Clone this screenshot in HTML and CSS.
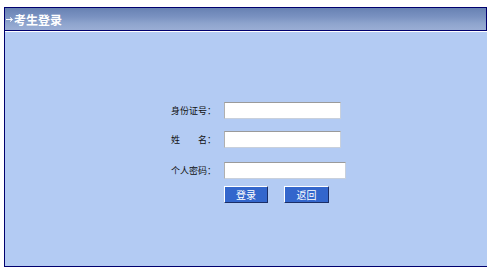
FILE: index.html
```html
<!DOCTYPE html>
<html lang="zh-CN">
<head>
<meta charset="utf-8">
<title>考生登录</title>
<link rel="stylesheet" href="styles.css">
</head>
<body>
<div class="panel">
  <div class="panel-head">
    <svg class="arrow" width="7" height="5" viewBox="0 0 7 5"><path d="M0 2.5H6M4 0.5L6.5 2.5L4 4.5" fill="none" stroke="#fff" stroke-width="1"/></svg><span class="title">考生登录</span>
  </div>
  <div class="panel-body">
    <form class="login">
      <label class="lbl">身份证号：</label>
      <div class="field"><input class="txt" type="text"></div>
      <label class="lbl">姓　　名：</label>
      <div class="field"><input class="txt" type="text"></div>
      <label class="lbl">个人密码：</label>
      <div class="field"><input class="txt wide" type="password"></div>
      <span></span>
      <div class="btns"><button class="btn" type="button">登录</button><button class="btn btn2" type="button">返回</button></div>
    </form>
  </div>
</div>
</body>
</html>
```
FILE: styles.css
```css
html, body {
  margin: 0;
  padding: 0;
  background: #ffffff;
}
body {
  font-family: "Noto Sans CJK SC", "Noto Sans", sans-serif;
}
.panel {
  margin: 7px 0 0 4px;
  width: 482px;
  height: 258px;
  border-left: 1px solid #00006e;
  border-top: 1px solid #00006e;
  border-bottom: 1px solid #00006e;
  display: flex;
  flex-direction: column;
}
.panel-head {
  box-sizing: border-box;
  border-right: 1px solid #00006e;
  border-bottom: 1px solid #00006e;
  height: 23px;
  background: linear-gradient(#6882b3 0%, #7a92c1 40%, #8ea4cd 70%, #9aaed5 100%);
  display: flex;
  align-items: center;
  padding-left: 1px;
  color: #fff;
  font-weight: bold;
  font-size: 12px;
}
.arrow {
  margin-right: 1px;
  margin-top: 1px;
}
.title {
  line-height: 12px;
  margin-top: 1px;
}
.panel-body {
  flex: 1;
  border-top: 1px solid #ffffff;
  background: #b3cbf3;
}
.login {
  margin: 70px 0 0 145px;
  display: grid;
  grid-template-columns: 66px auto;
  grid-template-rows: 29px 31px 24px auto;
  column-gap: 8px;
  align-items: start;
}
.lbl {
  font-size: 9px;
  line-height: 17px;
  color: #111;
  text-align: right;
  white-space: nowrap;
}
.field {
  display: flex;
}
.txt {
  width: 117px;
  height: 17px;
  box-sizing: border-box;
  margin: 0;
  padding: 0 2px;
  border: 1px solid #c8d0dc;
  border-top-color: #9a9a9a;
  border-left-color: #b0b0b0;
  background: #fff;
  font-size: 9px;
}
.txt.wide {
  width: 122px;
}
.btns {
  display: flex;
  gap: 16px;
}
.btn {
  width: 44px;
  height: 17px;
  box-sizing: border-box;
  margin: 0;
  padding: 0;
  background: #3366cc;
  color: #fff;
  font-family: "Noto Sans CJK SC", sans-serif;
  font-size: 10px;
  line-height: 13px;
  border: 1px solid;
  border-color: #ffffff #1b2e66 #1b2e66 #ffffff;
}
.btn2 {
  width: 45px;
}
```
